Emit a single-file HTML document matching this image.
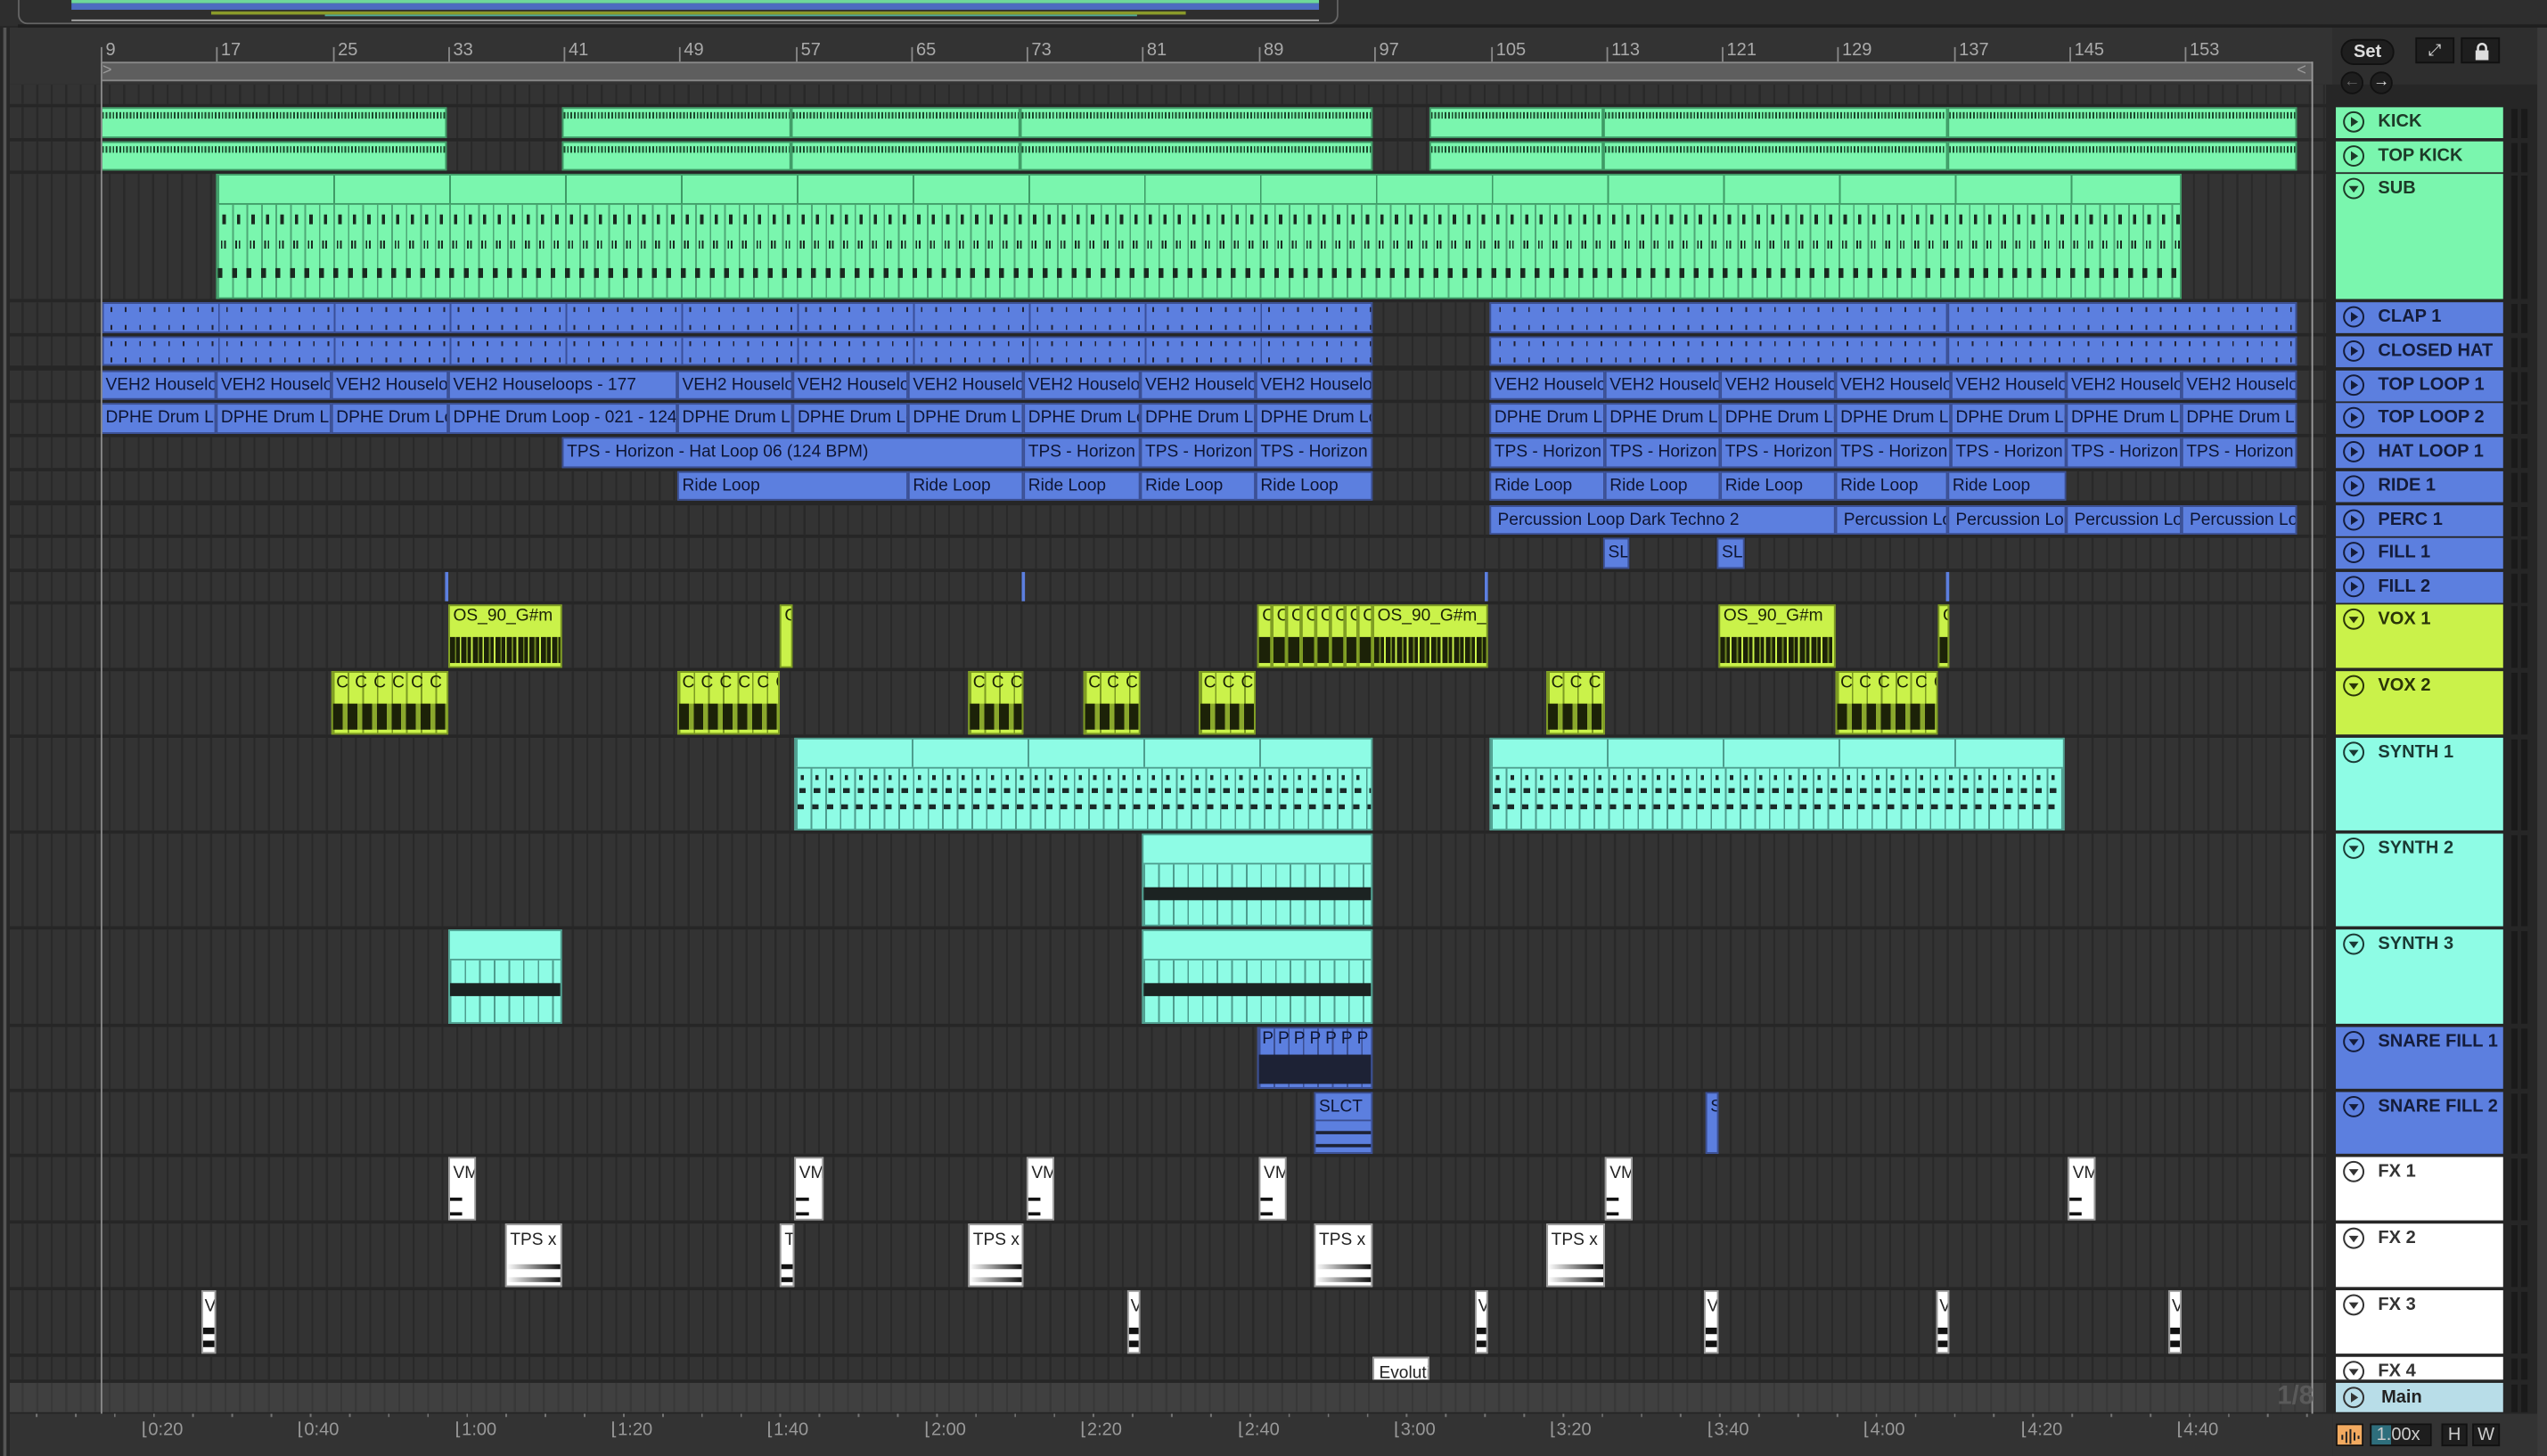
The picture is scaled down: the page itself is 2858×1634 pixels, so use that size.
<!DOCTYPE html>
<html><head><meta charset="utf-8">
<style>
html,body{margin:0;padding:0;background:#2a2a2a;width:2858px;height:1634px;overflow:hidden}
#s{position:absolute;left:0;top:0;width:1568px;height:896px;transform:scale(1.82270,1.82366);transform-origin:0 0;font-family:"Liberation Sans",sans-serif;background:#262626}
.a{position:absolute;box-sizing:border-box}
.ln{position:absolute;left:6px;width:1426px;background-color:#333;background-image:repeating-linear-gradient(90deg,#292929 0 1.2px,transparent 1.2px 8.91px);background-position:7.5px 0}
.c{position:absolute;top:0;height:100%;box-sizing:border-box;overflow:hidden;white-space:nowrap;font-size:10.5px;line-height:13px;padding-left:2px}
.g{background:#7af6ae;border:1px solid #3f9a66;color:#123}
.b{background:#5c7fdf;border:1px solid #3b4f92;color:#0e1533}
.y{background:#caf24a;border:1px solid #7c9a22;color:#1b2206}
.q{background:#8efce5;border:1px solid #4e9d8e}
.w{background:#fff;border:1px solid #999;color:#222}
.mk{background-image:repeating-linear-gradient(90deg,#1c4a2c 0 1px,transparent 1px 2.1px);background-size:100% 4px,100% 4px;background-repeat:no-repeat}
.hd{position:absolute;left:1438px;width:103px;box-sizing:border-box;font-weight:bold;font-size:11px;padding-left:26px;line-height:19px;overflow:hidden}
.hd svg{position:absolute;left:4px;top:2px}
.mt{position:absolute;left:1546px;width:10px;background:linear-gradient(90deg,#1a1a1a 0 4px,transparent 4px 6px,#1a1a1a 6px 10px)}
.rn{position:absolute;top:25px;font-size:11px;color:#aaa}
.rt{position:absolute;top:29px;width:1px;height:9px;background:#888}
.tl{position:absolute;top:873px;font-size:11px;color:#999}
</style></head><body><div id="s">
<div class="a" style="left:0;top:0;width:1568px;height:16px;background:#2e2e2e"></div>
<div class="a" style="left:11px;top:-4px;width:813px;height:19px;border:1.5px solid #666;border-top:none;border-radius:0 0 6px 6px"></div>
<div class="a" style="left:44px;top:0;width:768px;height:2px;background:#6ed89a"></div>
<div class="a" style="left:44px;top:2px;width:768px;height:4px;background:#4d6cc0"></div>
<div class="a" style="left:130px;top:7px;width:600px;height:1.5px;background:#8a9a2a"></div>
<div class="a" style="left:200px;top:8.5px;width:500px;height:1.5px;background:#4fa89a"></div>
<div class="a" style="left:44px;top:12px;width:768px;height:1px;background:#aaa"></div>
<div class="a" style="left:11px;top:15px;width:1557px;height:2px;background:#1f1f1f"></div>
<div class="a" style="left:6px;top:17px;width:1430px;height:35px;background:#333"></div>
<div class="rt" style="left:62px"></div><div class="rn" style="left:65px">9</div>
<div class="rt" style="left:133px"></div><div class="rn" style="left:136px">17</div>
<div class="rt" style="left:205px"></div><div class="rn" style="left:208px">25</div>
<div class="rt" style="left:276px"></div><div class="rn" style="left:279px">33</div>
<div class="rt" style="left:347px"></div><div class="rn" style="left:350px">41</div>
<div class="rt" style="left:418px"></div><div class="rn" style="left:421px">49</div>
<div class="rt" style="left:490px"></div><div class="rn" style="left:493px">57</div>
<div class="rt" style="left:561px"></div><div class="rn" style="left:564px">65</div>
<div class="rt" style="left:632px"></div><div class="rn" style="left:635px">73</div>
<div class="rt" style="left:703px"></div><div class="rn" style="left:706px">81</div>
<div class="rt" style="left:775px"></div><div class="rn" style="left:778px">89</div>
<div class="rt" style="left:846px"></div><div class="rn" style="left:849px">97</div>
<div class="rt" style="left:918px"></div><div class="rn" style="left:921px">105</div>
<div class="rt" style="left:989px"></div><div class="rn" style="left:992px">113</div>
<div class="rt" style="left:1060px"></div><div class="rn" style="left:1063px">121</div>
<div class="rt" style="left:1131px"></div><div class="rn" style="left:1134px">129</div>
<div class="rt" style="left:1203px"></div><div class="rn" style="left:1206px">137</div>
<div class="rt" style="left:1274px"></div><div class="rn" style="left:1277px">145</div>
<div class="rt" style="left:1345px"></div><div class="rn" style="left:1348px">153</div>
<div class="a" style="left:62px;top:38px;width:1362px;height:12px;background:#5e5e5e;border-top:1px solid #888;border-bottom:1px solid #888"></div>
<div class="a" style="left:63px;top:39px;color:#999;font-size:10px;line-height:10px">&gt;</div>
<div class="a" style="left:1414px;top:39px;color:#999;font-size:10px;line-height:10px">&lt;</div>
<div class="ln" style="top:52px;height:12px"></div>
<div class="ln" style="top:66px;height:19px"><div class="c g mk" style="left:56px;width:213px;background-position:0 2px,0 12px"></div><div class="c g mk" style="left:340px;width:141px;background-position:0 2px,0 12px"></div><div class="c g mk" style="left:481px;width:141px;background-position:0 2px,0 12px"></div><div class="c g mk" style="left:622px;width:217px;background-position:0 2px,0 12px"></div><div class="c g mk" style="left:874px;width:107px;background-position:0 2px,0 12px"></div><div class="c g mk" style="left:981px;width:212px;background-position:0 2px,0 12px"></div><div class="c g mk" style="left:1193px;width:215px;background-position:0 2px,0 12px"></div></div>
<div class="ln" style="top:87px;height:18px"><div class="c g mk" style="left:56px;width:213px;background-position:0 2px,0 12px"></div><div class="c g mk" style="left:340px;width:141px;background-position:0 2px,0 12px"></div><div class="c g mk" style="left:481px;width:141px;background-position:0 2px,0 12px"></div><div class="c g mk" style="left:622px;width:217px;background-position:0 2px,0 12px"></div><div class="c g mk" style="left:874px;width:107px;background-position:0 2px,0 12px"></div><div class="c g mk" style="left:981px;width:212px;background-position:0 2px,0 12px"></div><div class="c g mk" style="left:1193px;width:215px;background-position:0 2px,0 12px"></div></div>
<div class="ln" style="top:107px;height:77px"><div class="c g" style="left:127px;width:1210px;background-image:linear-gradient(#3f9a66,#3f9a66),repeating-linear-gradient(90deg,#3f9a66 0 1px,transparent 1px 71.3px),repeating-linear-gradient(90deg,transparent 0 3px,#1a2a20 3px 5px,transparent 5px 8.91px),repeating-linear-gradient(90deg,transparent 0 2px,#1a2a20 2px 3px,transparent 3px 4px,#1a2a20 4px 5px,transparent 5px 8.91px),repeating-linear-gradient(90deg,#1a2a20 0 3px,transparent 3px 8.91px),repeating-linear-gradient(90deg,#4fa877 0 1px,transparent 1px 8.91px);background-size:100% 1px,100% 17px,100% 6px,100% 5px,100% 6px,100% 60px;background-position:0 17px,0 0,0 24px,0 40px,0 57px,0 18px;background-repeat:no-repeat"></div></div>
<div class="ln" style="top:186px;height:19px"><div class="c b" style="left:56px;width:783px;background-image:repeating-linear-gradient(90deg,#3a4f98 0 1px,transparent 1px 71.3px),repeating-linear-gradient(90deg,#223 0 1px,transparent 1px 8.91px),repeating-linear-gradient(90deg,#223 0 1px,transparent 1px 8.91px);background-size:100% 100%,100% 3px,100% 3px;background-position:0 0,5px 2px,5px 13px;background-repeat:no-repeat"></div><div class="c b" style="left:911px;width:282px;background-image:repeating-linear-gradient(90deg,#223 0 1px,transparent 1px 8.91px),repeating-linear-gradient(90deg,#223 0 1px,transparent 1px 8.91px);background-size:100% 3px,100% 3px;background-position:5px 2px,5px 13px;background-repeat:no-repeat"></div><div class="c b" style="left:1193px;width:215px;background-image:repeating-linear-gradient(90deg,#223 0 1px,transparent 1px 8.91px),repeating-linear-gradient(90deg,#223 0 1px,transparent 1px 8.91px);background-size:100% 3px,100% 3px;background-position:5px 2px,5px 13px;background-repeat:no-repeat"></div></div>
<div class="ln" style="top:207px;height:18px"><div class="c b" style="left:56px;width:783px;background-image:repeating-linear-gradient(90deg,#3a4f98 0 1px,transparent 1px 71.3px),repeating-linear-gradient(90deg,#223 0 1px,transparent 1px 8.91px),repeating-linear-gradient(90deg,#223 0 1px,transparent 1px 8.91px);background-size:100% 100%,100% 3px,100% 3px;background-position:0 0,5px 2px,5px 12px;background-repeat:no-repeat"></div><div class="c b" style="left:911px;width:282px;background-image:repeating-linear-gradient(90deg,#223 0 1px,transparent 1px 8.91px),repeating-linear-gradient(90deg,#223 0 1px,transparent 1px 8.91px);background-size:100% 3px,100% 3px;background-position:5px 2px,5px 12px;background-repeat:no-repeat"></div><div class="c b" style="left:1193px;width:215px;background-image:repeating-linear-gradient(90deg,#223 0 1px,transparent 1px 8.91px),repeating-linear-gradient(90deg,#223 0 1px,transparent 1px 8.91px);background-size:100% 3px,100% 3px;background-position:5px 2px,5px 12px;background-repeat:no-repeat"></div></div>
<div class="ln" style="top:228px;height:18px;line-height:18px">
<div class="c b" style="left:56px;width:71px;line-height:16px">VEH2 Houseloops</div><div class="c b" style="left:127px;width:71px;line-height:16px">VEH2 Houseloops</div><div class="c b" style="left:198px;width:72px;line-height:16px">VEH2 Houseloops</div><div class="c b" style="left:270px;width:141px;line-height:16px">VEH2 Houseloops - 177</div><div class="c b" style="left:411px;width:71px;line-height:16px">VEH2 Houseloops</div><div class="c b" style="left:482px;width:71px;line-height:16px">VEH2 Houseloops</div><div class="c b" style="left:553px;width:71px;line-height:16px">VEH2 Houseloops</div><div class="c b" style="left:624px;width:72px;line-height:16px">VEH2 Houseloops</div><div class="c b" style="left:696px;width:71px;line-height:16px">VEH2 Houseloops</div><div class="c b" style="left:767px;width:72px;line-height:16px">VEH2 Houseloops</div>
<div class="c b" style="left:911px;width:71px;line-height:16px">VEH2 Houseloops</div><div class="c b" style="left:982px;width:71px;line-height:16px">VEH2 Houseloops</div><div class="c b" style="left:1053px;width:71px;line-height:16px">VEH2 Houseloops</div><div class="c b" style="left:1124px;width:71px;line-height:16px">VEH2 Houseloops</div><div class="c b" style="left:1195px;width:71px;line-height:16px">VEH2 Houseloops</div><div class="c b" style="left:1266px;width:71px;line-height:16px">VEH2 Houseloops</div><div class="c b" style="left:1337px;width:71px;line-height:16px">VEH2 Houseloops</div></div>
<div class="ln" style="top:248px;height:19px">
<div class="c b" style="left:56px;width:71px;line-height:17px">DPHE Drum Loop</div><div class="c b" style="left:127px;width:71px;line-height:17px">DPHE Drum Loop</div><div class="c b" style="left:198px;width:72px;line-height:17px">DPHE Drum Loop</div><div class="c b" style="left:270px;width:141px;line-height:17px">DPHE Drum Loop - 021 - 124</div><div class="c b" style="left:411px;width:71px;line-height:17px">DPHE Drum Loop</div><div class="c b" style="left:482px;width:71px;line-height:17px">DPHE Drum Loop</div><div class="c b" style="left:553px;width:71px;line-height:17px">DPHE Drum Loop</div><div class="c b" style="left:624px;width:72px;line-height:17px">DPHE Drum Loop</div><div class="c b" style="left:696px;width:71px;line-height:17px">DPHE Drum Loop</div><div class="c b" style="left:767px;width:72px;line-height:17px">DPHE Drum Loop</div>
<div class="c b" style="left:911px;width:71px;line-height:17px">DPHE Drum Loop</div><div class="c b" style="left:982px;width:71px;line-height:17px">DPHE Drum Loop</div><div class="c b" style="left:1053px;width:71px;line-height:17px">DPHE Drum Loop</div><div class="c b" style="left:1124px;width:71px;line-height:17px">DPHE Drum Loop</div><div class="c b" style="left:1195px;width:71px;line-height:17px">DPHE Drum Loop</div><div class="c b" style="left:1266px;width:71px;line-height:17px">DPHE Drum Loop</div><div class="c b" style="left:1337px;width:71px;line-height:17px">DPHE Drum Loop</div></div>
<div class="ln" style="top:269px;height:19px">
<div class="c b" style="left:340px;width:284px;line-height:17px">TPS - Horizon - Hat Loop 06 (124 BPM)</div><div class="c b" style="left:624px;width:72px;line-height:17px">TPS - Horizon</div><div class="c b" style="left:696px;width:71px;line-height:17px">TPS - Horizon</div><div class="c b" style="left:767px;width:72px;line-height:17px">TPS - Horizon</div>
<div class="c b" style="left:911px;width:71px;line-height:17px">TPS - Horizon</div><div class="c b" style="left:982px;width:71px;line-height:17px">TPS - Horizon</div><div class="c b" style="left:1053px;width:71px;line-height:17px">TPS - Horizon</div><div class="c b" style="left:1124px;width:71px;line-height:17px">TPS - Horizon</div><div class="c b" style="left:1195px;width:71px;line-height:17px">TPS - Horizon</div><div class="c b" style="left:1266px;width:71px;line-height:17px">TPS - Horizon</div><div class="c b" style="left:1337px;width:71px;line-height:17px">TPS - Horizon</div></div>
<div class="ln" style="top:290px;height:18px">
<div class="c b" style="left:411px;width:142px;line-height:17px">Ride Loop</div><div class="c b" style="left:553px;width:71px;line-height:17px">Ride Loop</div><div class="c b" style="left:624px;width:72px;line-height:17px">Ride Loop</div><div class="c b" style="left:696px;width:71px;line-height:17px">Ride Loop</div><div class="c b" style="left:767px;width:72px;line-height:17px">Ride Loop</div>
<div class="c b" style="left:911px;width:71px;line-height:17px">Ride Loop</div><div class="c b" style="left:982px;width:71px;line-height:17px">Ride Loop</div><div class="c b" style="left:1053px;width:71px;line-height:17px">Ride Loop</div><div class="c b" style="left:1124px;width:69px;line-height:17px">Ride Loop</div><div class="c b" style="left:1193px;width:73px;line-height:17px">Ride Loop</div></div>
<div class="ln" style="top:311px;height:18px">
<div class="c b" style="left:911px;width:213px;line-height:17px;padding-left:4px">Percussion Loop Dark Techno 2</div><div class="c b" style="left:1124px;width:69px;line-height:17px;padding-left:4px">Percussion Loop</div><div class="c b" style="left:1193px;width:73px;line-height:17px;padding-left:4px">Percussion Loop</div><div class="c b" style="left:1266px;width:71px;line-height:17px;padding-left:4px">Percussion Loop</div><div class="c b" style="left:1337px;width:71px;line-height:17px;padding-left:4px">Percussion Loop</div></div>
<div class="ln" style="top:331px;height:19px"><div class="c b" style="left:981px;width:16px;line-height:17px">SLC</div><div class="c b" style="left:1051px;width:17px;line-height:17px">SLC</div></div>
<div class="ln" style="top:352px;height:18px"><div class="c b" style="left:268px;width:2px;border:none"></div><div class="c b" style="left:623px;width:2px;border:none"></div><div class="c b" style="left:908px;width:2px;border:none"></div><div class="c b" style="left:1192px;width:2px;border:none"></div></div>
<div class="ln" style="top:372px;height:39px">
<div class="c y" style="left:270px;width:70px;background-image:repeating-linear-gradient(90deg,#1c2208 0 3px,#6b8420 3px 4px,#1c2208 4px 6px,transparent 6px 7px);background-size:100% 16px;background-position:0 19px;background-repeat:no-repeat">OS_90_G#m</div>
<div class="c y" style="left:474px;width:8px">C</div>
<div class="c y" style="left:768px;width:9px;background-image:linear-gradient(#1c2208,#1c2208);background-size:100% 16px;background-position:0 19px;background-repeat:no-repeat">C</div><div class="c y" style="left:777px;width:9px;background-image:linear-gradient(#1c2208,#1c2208);background-size:100% 16px;background-position:0 19px;background-repeat:no-repeat">C</div><div class="c y" style="left:786px;width:9px;background-image:linear-gradient(#1c2208,#1c2208);background-size:100% 16px;background-position:0 19px;background-repeat:no-repeat">C</div><div class="c y" style="left:795px;width:9px;background-image:linear-gradient(#1c2208,#1c2208);background-size:100% 16px;background-position:0 19px;background-repeat:no-repeat">C</div><div class="c y" style="left:804px;width:9px;background-image:linear-gradient(#1c2208,#1c2208);background-size:100% 16px;background-position:0 19px;background-repeat:no-repeat">C</div><div class="c y" style="left:813px;width:9px;background-image:linear-gradient(#1c2208,#1c2208);background-size:100% 16px;background-position:0 19px;background-repeat:no-repeat">C</div><div class="c y" style="left:822px;width:8px;background-image:linear-gradient(#1c2208,#1c2208);background-size:100% 16px;background-position:0 19px;background-repeat:no-repeat">C</div><div class="c y" style="left:830px;width:9px;background-image:linear-gradient(#1c2208,#1c2208);background-size:100% 16px;background-position:0 19px;background-repeat:no-repeat">C</div>
<div class="c y" style="left:839px;width:71px;background-image:repeating-linear-gradient(90deg,#1c2208 0 3px,#6b8420 3px 4px,#1c2208 4px 6px,transparent 6px 7px);background-size:100% 16px;background-position:0 19px;background-repeat:no-repeat">OS_90_G#m_</div>
<div class="c y" style="left:1052px;width:72px;background-image:repeating-linear-gradient(90deg,#1c2208 0 3px,#6b8420 3px 4px,#1c2208 4px 6px,transparent 6px 7px);background-size:100% 16px;background-position:0 19px;background-repeat:no-repeat">OS_90_G#m</div>
<div class="c y" style="left:1187px;width:7px;background-image:linear-gradient(#1c2208,#1c2208);background-size:100% 16px;background-position:0 19px;background-repeat:no-repeat">C</div></div>
<div class="ln" style="top:413px;height:39px">
<div class="c y" style="left:198px;width:72px;background-image:repeating-linear-gradient(90deg,#1c2208 0 6px,#8aa82c 6px 9px),repeating-linear-gradient(90deg,#7c9a22 0 1px,transparent 1px 9px);background-size:100% 16px,100% 100%;background-position:0 19px,0 0;background-repeat:no-repeat;word-spacing:1px">C C C C C C C C</div>
<div class="c y" style="left:411px;width:63px;background-image:repeating-linear-gradient(90deg,#1c2208 0 6px,#8aa82c 6px 9px),repeating-linear-gradient(90deg,#7c9a22 0 1px,transparent 1px 9px);background-size:100% 16px,100% 100%;background-position:0 19px,0 0;background-repeat:no-repeat;word-spacing:1px">C C C C C C C</div>
<div class="c y" style="left:590px;width:34px;background-image:repeating-linear-gradient(90deg,#1c2208 0 6px,#8aa82c 6px 9px),repeating-linear-gradient(90deg,#7c9a22 0 1px,transparent 1px 9px);background-size:100% 16px,100% 100%;background-position:0 19px,0 0;background-repeat:no-repeat;word-spacing:1px">C C C C</div>
<div class="c y" style="left:661px;width:35px;background-image:repeating-linear-gradient(90deg,#1c2208 0 6px,#8aa82c 6px 9px),repeating-linear-gradient(90deg,#7c9a22 0 1px,transparent 1px 9px);background-size:100% 16px,100% 100%;background-position:0 19px,0 0;background-repeat:no-repeat;word-spacing:1px">C C C C</div>
<div class="c y" style="left:732px;width:35px;background-image:repeating-linear-gradient(90deg,#1c2208 0 6px,#8aa82c 6px 9px),repeating-linear-gradient(90deg,#7c9a22 0 1px,transparent 1px 9px);background-size:100% 16px,100% 100%;background-position:0 19px,0 0;background-repeat:no-repeat;word-spacing:1px">C C C C</div>
<div class="c y" style="left:946px;width:36px;background-image:repeating-linear-gradient(90deg,#1c2208 0 6px,#8aa82c 6px 9px),repeating-linear-gradient(90deg,#7c9a22 0 1px,transparent 1px 9px);background-size:100% 16px,100% 100%;background-position:0 19px,0 0;background-repeat:no-repeat;word-spacing:1px">C C C C</div>
<div class="c y" style="left:1124px;width:63px;background-image:repeating-linear-gradient(90deg,#1c2208 0 6px,#8aa82c 6px 9px),repeating-linear-gradient(90deg,#7c9a22 0 1px,transparent 1px 9px);background-size:100% 16px,100% 100%;background-position:0 19px,0 0;background-repeat:no-repeat;word-spacing:1px">C C C C C C C</div></div>
<div class="ln" style="top:454px;height:57px">
<div class="c q" style="left:483px;width:356px;background-image:linear-gradient(#4e9d8e,#4e9d8e),repeating-linear-gradient(90deg,#4e9d8e 0 1px,transparent 1px 71.3px),repeating-linear-gradient(90deg,#4e9d8e 0 1px,transparent 1px 9px),repeating-linear-gradient(90deg,transparent 0 3px,#1a2a28 3px 5px,transparent 5px 9px),repeating-linear-gradient(90deg,transparent 0 2px,#1a2a28 2px 6px,transparent 6px 9px),repeating-linear-gradient(90deg,transparent 0 1px,#1a2a28 1px 5px,transparent 5px 9px);background-size:100% 1px,100% 17px,100% 40px,100% 3px,100% 3px,100% 3px;background-position:0 17px,0 0,0 18px,0 22px,0 30px,0 40px;background-repeat:no-repeat"></div>
<div class="c q" style="left:911px;width:354px;background-image:linear-gradient(#4e9d8e,#4e9d8e),repeating-linear-gradient(90deg,#4e9d8e 0 1px,transparent 1px 71.3px),repeating-linear-gradient(90deg,#4e9d8e 0 1px,transparent 1px 9px),repeating-linear-gradient(90deg,transparent 0 3px,#1a2a28 3px 5px,transparent 5px 9px),repeating-linear-gradient(90deg,transparent 0 2px,#1a2a28 2px 6px,transparent 6px 9px),repeating-linear-gradient(90deg,transparent 0 1px,#1a2a28 1px 5px,transparent 5px 9px);background-size:100% 1px,100% 17px,100% 40px,100% 3px,100% 3px,100% 3px;background-position:0 17px,0 0,0 18px,0 22px,0 30px,0 40px;background-repeat:no-repeat"></div></div>
<div class="ln" style="top:513px;height:57px">
<div class="c q" style="left:697px;width:142px;background-image:linear-gradient(#4e9d8e,#4e9d8e),linear-gradient(#1c2322,#1c2322),repeating-linear-gradient(90deg,#4e9d8e 0 1px,transparent 1px 9px);background-size:100% 1px,100% 8px,100% 40px;background-position:0 17px,0 32px,0 18px;background-repeat:no-repeat"></div></div>
<div class="ln" style="top:572px;height:58px">
<div class="c q" style="left:270px;width:70px;background-image:linear-gradient(#4e9d8e,#4e9d8e),linear-gradient(#1c2322,#1c2322),repeating-linear-gradient(90deg,#4e9d8e 0 1px,transparent 1px 9px);background-size:100% 1px,100% 8px,100% 40px;background-position:0 17px,0 32px,0 18px;background-repeat:no-repeat"></div>
<div class="c q" style="left:697px;width:142px;background-image:linear-gradient(#4e9d8e,#4e9d8e),linear-gradient(#1c2322,#1c2322),repeating-linear-gradient(90deg,#4e9d8e 0 1px,transparent 1px 9px);background-size:100% 1px,100% 8px,100% 40px;background-position:0 17px,0 32px,0 18px;background-repeat:no-repeat"></div></div>
<div class="ln" style="top:632px;height:38px"><div class="c b" style="left:768px;width:71px;background-image:linear-gradient(#1d2235,#1d2235),repeating-linear-gradient(90deg,#3b4f92 0 1px,transparent 1px 9px);background-size:100% 18px,100% 100%;background-position:0 16px,0 0;background-repeat:no-repeat">P P P P P P P P</div></div>
<div class="ln" style="top:672px;height:38px"><div class="c b" style="left:803px;width:36px;line-height:17px;background-image:linear-gradient(#3b4f92,#3b4f92),linear-gradient(#1d2235,#1d2235),linear-gradient(#1d2235,#1d2235);background-size:100% 1px,100% 2px,100% 2px;background-position:0 16px,0 23px,0 31px;background-repeat:no-repeat">SLCT</div><div class="c b" style="left:1044px;width:8px;line-height:17px">S</div></div>
<div class="ln" style="top:712px;height:39px">
<div class="c w" style="left:270px;width:17px;line-height:18px;background-image:linear-gradient(#111,#111),linear-gradient(#111,#111);background-size:50% 2px,50% 2px;background-position:0 24px,0 33px;background-repeat:no-repeat">VM</div><div class="c w" style="left:483px;width:18px;line-height:18px;background-image:linear-gradient(#111,#111),linear-gradient(#111,#111);background-size:50% 2px,50% 2px;background-position:0 24px,0 33px;background-repeat:no-repeat">VM</div><div class="c w" style="left:626px;width:17px;line-height:18px;background-image:linear-gradient(#111,#111),linear-gradient(#111,#111);background-size:50% 2px,50% 2px;background-position:0 24px,0 33px;background-repeat:no-repeat">VM</div><div class="c w" style="left:769px;width:17px;line-height:18px;background-image:linear-gradient(#111,#111),linear-gradient(#111,#111);background-size:50% 2px,50% 2px;background-position:0 24px,0 33px;background-repeat:no-repeat">VM</div><div class="c w" style="left:982px;width:17px;line-height:18px;background-image:linear-gradient(#111,#111),linear-gradient(#111,#111);background-size:50% 2px,50% 2px;background-position:0 24px,0 33px;background-repeat:no-repeat">VM</div><div class="c w" style="left:1267px;width:17px;line-height:18px;background-image:linear-gradient(#111,#111),linear-gradient(#111,#111);background-size:50% 2px,50% 2px;background-position:0 24px,0 33px;background-repeat:no-repeat">VM</div></div>
<div class="ln" style="top:753px;height:39px">
<div class="c w" style="left:305px;width:35px;line-height:18px;background-image:linear-gradient(90deg,#fff,#111),linear-gradient(90deg,#fff,#111);background-size:100% 3px,100% 3px;background-position:0 24px,0 32px;background-repeat:no-repeat">TPS x S</div><div class="c w" style="left:474px;width:9px;line-height:18px;background-image:linear-gradient(#111,#111),linear-gradient(#111,#111);background-size:100% 3px,100% 3px;background-position:0 24px,0 32px;background-repeat:no-repeat">T</div><div class="c w" style="left:590px;width:34px;line-height:18px;background-image:linear-gradient(90deg,#fff,#111),linear-gradient(90deg,#fff,#111);background-size:100% 3px,100% 3px;background-position:0 24px,0 32px;background-repeat:no-repeat">TPS x S</div><div class="c w" style="left:803px;width:36px;line-height:18px;background-image:linear-gradient(90deg,#fff,#111),linear-gradient(90deg,#fff,#111);background-size:100% 3px,100% 3px;background-position:0 24px,0 32px;background-repeat:no-repeat">TPS x S</div><div class="c w" style="left:946px;width:36px;line-height:18px;background-image:linear-gradient(90deg,#fff,#111),linear-gradient(90deg,#fff,#111);background-size:100% 3px,100% 3px;background-position:0 24px,0 32px;background-repeat:no-repeat">TPS x S</div></div>
<div class="ln" style="top:794px;height:39px">
<div class="c w" style="left:118px;width:9px;line-height:18px;padding-left:1px;background-image:linear-gradient(#111,#111),linear-gradient(#111,#111);background-size:100% 4px,100% 4px;background-position:0 22px,0 30px;background-repeat:no-repeat">V</div><div class="c w" style="left:688px;width:8px;line-height:18px;padding-left:1px;background-image:linear-gradient(#111,#111),linear-gradient(#111,#111);background-size:100% 4px,100% 4px;background-position:0 22px,0 30px;background-repeat:no-repeat">V</div><div class="c w" style="left:902px;width:8px;line-height:18px;padding-left:1px;background-image:linear-gradient(#111,#111),linear-gradient(#111,#111);background-size:100% 4px,100% 4px;background-position:0 22px,0 30px;background-repeat:no-repeat">V</div><div class="c w" style="left:1043px;width:9px;line-height:18px;padding-left:1px;background-image:linear-gradient(#111,#111),linear-gradient(#111,#111);background-size:100% 4px,100% 4px;background-position:0 22px,0 30px;background-repeat:no-repeat">V</div><div class="c w" style="left:1186px;width:8px;line-height:18px;padding-left:1px;background-image:linear-gradient(#111,#111),linear-gradient(#111,#111);background-size:100% 4px,100% 4px;background-position:0 22px,0 30px;background-repeat:no-repeat">V</div><div class="c w" style="left:1329px;width:8px;line-height:18px;padding-left:1px;background-image:linear-gradient(#111,#111),linear-gradient(#111,#111);background-size:100% 4px,100% 4px;background-position:0 22px,0 30px;background-repeat:no-repeat">V</div></div>
<div class="ln" style="top:835px;height:14px"><div class="c w" style="left:839px;width:35px;line-height:18px;padding-left:3px;border-bottom:none">Evolution</div></div>
<div class="ln" style="top:851px;height:18px;background-color:#404040;background-image:repeating-linear-gradient(90deg,#383838 0 1.2px,transparent 1.2px 8.91px)"></div>
<div class="a" style="left:61.5px;top:38px;width:1px;height:832px;background:#8a8a8a"></div>
<div class="a" style="left:1423px;top:38px;width:1.2px;height:832px;background:#9a9a9a"></div>
<div class="a" style="left:2px;top:17px;width:2px;height:879px;background:#555"></div>
<div class="a" style="left:6px;top:870px;width:1430px;height:26px;background:#333"></div>
<div class="tl" style="left:87px">⌊0:20</div><div class="tl" style="left:183px">⌊0:40</div><div class="tl" style="left:280px">⌊1:00</div><div class="tl" style="left:376px">⌊1:20</div><div class="tl" style="left:472px">⌊1:40</div><div class="tl" style="left:569px">⌊2:00</div><div class="tl" style="left:665px">⌊2:20</div><div class="tl" style="left:762px">⌊2:40</div><div class="tl" style="left:858px">⌊3:00</div><div class="tl" style="left:954px">⌊3:20</div><div class="tl" style="left:1051px">⌊3:40</div><div class="tl" style="left:1147px">⌊4:00</div><div class="tl" style="left:1244px">⌊4:20</div><div class="tl" style="left:1340px">⌊4:40</div>
<div class="a" style="left:6px;top:870px;width:1418px;height:2px;background-image:repeating-linear-gradient(90deg,#777 0 1px,transparent 1px 24.1px);background-position:16px 0"></div>
<div class="a" style="left:1402px;top:851px;font-size:16px;font-weight:bold;color:#5a5a5a;line-height:18px">1/8</div>
<div class="a" style="left:1436px;top:17px;width:126px;height:35px;background:#2e2e2e"></div>
<div class="a" style="left:1441px;top:24px;width:33px;height:16px;border-radius:8px;background:#1e1e1e;border:1px solid #111;color:#ddd;font-size:11px;font-weight:bold;text-align:center;line-height:14px">Set</div>
<div class="a" style="left:1487px;top:23px;width:24px;height:16px;background:#1e1e1e;border:1px solid #111;color:#ddd;font-size:10px;text-align:center;line-height:15px">⤢</div>
<div class="a" style="left:1515px;top:23px;width:24px;height:16px;background:#1e1e1e;border:1px solid #111"><svg width="24" height="16" viewBox="0 0 24 16"><rect x="8" y="7" width="8" height="6" fill="#ddd"/><path d="M9.5 7V5.5a2.5 2.5 0 0 1 5 0V7" stroke="#ddd" stroke-width="1.4" fill="none"/></svg></div>
<div class="a" style="left:1441px;top:44px;width:14px;height:14px;border-radius:7px;background:#1e1e1e;border:1px solid #111;color:#666;font-size:10px;text-align:center;line-height:12px">←</div>
<div class="a" style="left:1459px;top:44px;width:14px;height:14px;border-radius:7px;background:#1e1e1e;border:1px solid #111;color:#ddd;font-size:10px;text-align:center;line-height:12px">→</div>
<div class="hd" style="top:66px;height:19px;background:#7af6ae;color:#1d3a28"><svg width="14" height="14"><circle cx="7" cy="7" r="6" fill="none" stroke="#1d3a28" stroke-width="1.1"/><path d="M5.3 4v6l4.5-3z" fill="#1d3a28"/></svg>KICK</div>
<div class="hd" style="top:87px;height:19px;background:#7af6ae;color:#1d3a28"><svg width="14" height="14"><circle cx="7" cy="7" r="6" fill="none" stroke="#1d3a28" stroke-width="1.1"/><path d="M5.3 4v6l4.5-3z" fill="#1d3a28"/></svg>TOP KICK</div>
<div class="hd" style="top:107px;height:77px;background:#7af6ae;color:#1d3a28"><svg width="14" height="14"><circle cx="7" cy="7" r="6" fill="none" stroke="#1d3a28" stroke-width="1.1"/><path d="M4 5.5h6l-3 4z" fill="#1d3a28"/></svg>SUB</div>
<div class="hd" style="top:186px;height:19px;background:#5c7fdf;color:#141c3a"><svg width="14" height="14"><circle cx="7" cy="7" r="6" fill="none" stroke="#141c3a" stroke-width="1.1"/><path d="M5.3 4v6l4.5-3z" fill="#141c3a"/></svg>CLAP 1</div>
<div class="hd" style="top:207px;height:19px;background:#5c7fdf;color:#141c3a"><svg width="14" height="14"><circle cx="7" cy="7" r="6" fill="none" stroke="#141c3a" stroke-width="1.1"/><path d="M5.3 4v6l4.5-3z" fill="#141c3a"/></svg>CLOSED HAT</div>
<div class="hd" style="top:228px;height:19px;background:#5c7fdf;color:#141c3a"><svg width="14" height="14"><circle cx="7" cy="7" r="6" fill="none" stroke="#141c3a" stroke-width="1.1"/><path d="M5.3 4v6l4.5-3z" fill="#141c3a"/></svg>TOP LOOP 1</div>
<div class="hd" style="top:248px;height:19px;background:#5c7fdf;color:#141c3a"><svg width="14" height="14"><circle cx="7" cy="7" r="6" fill="none" stroke="#141c3a" stroke-width="1.1"/><path d="M5.3 4v6l4.5-3z" fill="#141c3a"/></svg>TOP LOOP 2</div>
<div class="hd" style="top:269px;height:19px;background:#5c7fdf;color:#141c3a"><svg width="14" height="14"><circle cx="7" cy="7" r="6" fill="none" stroke="#141c3a" stroke-width="1.1"/><path d="M5.3 4v6l4.5-3z" fill="#141c3a"/></svg>HAT LOOP 1</div>
<div class="hd" style="top:290px;height:19px;background:#5c7fdf;color:#141c3a"><svg width="14" height="14"><circle cx="7" cy="7" r="6" fill="none" stroke="#141c3a" stroke-width="1.1"/><path d="M5.3 4v6l4.5-3z" fill="#141c3a"/></svg>RIDE 1</div>
<div class="hd" style="top:311px;height:19px;background:#5c7fdf;color:#141c3a"><svg width="14" height="14"><circle cx="7" cy="7" r="6" fill="none" stroke="#141c3a" stroke-width="1.1"/><path d="M5.3 4v6l4.5-3z" fill="#141c3a"/></svg>PERC 1</div>
<div class="hd" style="top:331px;height:19px;background:#5c7fdf;color:#141c3a"><svg width="14" height="14"><circle cx="7" cy="7" r="6" fill="none" stroke="#141c3a" stroke-width="1.1"/><path d="M5.3 4v6l4.5-3z" fill="#141c3a"/></svg>FILL 1</div>
<div class="hd" style="top:352px;height:19px;background:#5c7fdf;color:#141c3a"><svg width="14" height="14"><circle cx="7" cy="7" r="6" fill="none" stroke="#141c3a" stroke-width="1.1"/><path d="M5.3 4v6l4.5-3z" fill="#141c3a"/></svg>FILL 2</div>
<div class="hd" style="top:372px;height:39px;background:#caf24a;color:#2a3408"><svg width="14" height="14"><circle cx="7" cy="7" r="6" fill="none" stroke="#2a3408" stroke-width="1.1"/><path d="M4 5.5h6l-3 4z" fill="#2a3408"/></svg>VOX 1</div>
<div class="hd" style="top:413px;height:39px;background:#caf24a;color:#2a3408"><svg width="14" height="14"><circle cx="7" cy="7" r="6" fill="none" stroke="#2a3408" stroke-width="1.1"/><path d="M4 5.5h6l-3 4z" fill="#2a3408"/></svg>VOX 2</div>
<div class="hd" style="top:454px;height:57px;background:#8efce5;color:#1a3a34"><svg width="14" height="14"><circle cx="7" cy="7" r="6" fill="none" stroke="#1a3a34" stroke-width="1.1"/><path d="M4 5.5h6l-3 4z" fill="#1a3a34"/></svg>SYNTH 1</div>
<div class="hd" style="top:513px;height:57px;background:#8efce5;color:#1a3a34"><svg width="14" height="14"><circle cx="7" cy="7" r="6" fill="none" stroke="#1a3a34" stroke-width="1.1"/><path d="M4 5.5h6l-3 4z" fill="#1a3a34"/></svg>SYNTH 2</div>
<div class="hd" style="top:572px;height:58px;background:#8efce5;color:#1a3a34"><svg width="14" height="14"><circle cx="7" cy="7" r="6" fill="none" stroke="#1a3a34" stroke-width="1.1"/><path d="M4 5.5h6l-3 4z" fill="#1a3a34"/></svg>SYNTH 3</div>
<div class="hd" style="top:632px;height:38px;background:#5c7fdf;color:#141c3a"><svg width="14" height="14"><circle cx="7" cy="7" r="6" fill="none" stroke="#141c3a" stroke-width="1.1"/><path d="M4 5.5h6l-3 4z" fill="#141c3a"/></svg>SNARE FILL 1</div>
<div class="hd" style="top:672px;height:38px;background:#5c7fdf;color:#141c3a"><svg width="14" height="14"><circle cx="7" cy="7" r="6" fill="none" stroke="#141c3a" stroke-width="1.1"/><path d="M4 5.5h6l-3 4z" fill="#141c3a"/></svg>SNARE FILL 2</div>
<div class="hd" style="top:712px;height:39px;background:#fff;color:#333"><svg width="14" height="14"><circle cx="7" cy="7" r="6" fill="none" stroke="#333" stroke-width="1.1"/><path d="M4 5.5h6l-3 4z" fill="#333"/></svg>FX 1</div>
<div class="hd" style="top:753px;height:39px;background:#fff;color:#333"><svg width="14" height="14"><circle cx="7" cy="7" r="6" fill="none" stroke="#333" stroke-width="1.1"/><path d="M4 5.5h6l-3 4z" fill="#333"/></svg>FX 2</div>
<div class="hd" style="top:794px;height:39px;background:#fff;color:#333"><svg width="14" height="14"><circle cx="7" cy="7" r="6" fill="none" stroke="#333" stroke-width="1.1"/><path d="M4 5.5h6l-3 4z" fill="#333"/></svg>FX 3</div>
<div class="hd" style="top:835px;height:14px;background:#fff;color:#333"><svg width="14" height="14"><circle cx="7" cy="7" r="6" fill="none" stroke="#333" stroke-width="1.1"/><path d="M4 5.5h6l-3 4z" fill="#333"/></svg>FX 4</div>
<div class="hd" style="top:851px;height:18px;background:#b8dde8;color:#222;padding-left:28px;line-height:18px"><svg width="14" height="14"><circle cx="7" cy="7" r="6" fill="none" stroke="#333" stroke-width="1.1"/><path d="M5.3 4v6l4.5-3z" fill="#333"/></svg>Main</div>
<div class="mt" style="top:67px;height:18px"></div><div class="mt" style="top:88px;height:18px"></div><div class="mt" style="top:108px;height:76px"></div><div class="mt" style="top:187px;height:18px"></div><div class="mt" style="top:208px;height:18px"></div><div class="mt" style="top:229px;height:18px"></div><div class="mt" style="top:249px;height:18px"></div><div class="mt" style="top:270px;height:18px"></div><div class="mt" style="top:291px;height:18px"></div><div class="mt" style="top:312px;height:18px"></div><div class="mt" style="top:332px;height:18px"></div><div class="mt" style="top:353px;height:18px"></div><div class="mt" style="top:373px;height:38px"></div><div class="mt" style="top:414px;height:38px"></div><div class="mt" style="top:455px;height:56px"></div><div class="mt" style="top:514px;height:56px"></div><div class="mt" style="top:573px;height:57px"></div><div class="mt" style="top:633px;height:37px"></div><div class="mt" style="top:673px;height:37px"></div><div class="mt" style="top:713px;height:38px"></div><div class="mt" style="top:754px;height:38px"></div><div class="mt" style="top:795px;height:38px"></div><div class="mt" style="top:836px;height:13px"></div><div class="mt" style="top:852px;height:17px"></div>
<div class="a" style="left:1562px;top:17px;width:6px;height:879px;background:#3a3a3a"></div>
<div class="a" style="left:1436px;top:870px;width:126px;height:26px;background:#333"></div>
<div class="a" style="left:1438px;top:876px;width:17px;height:14px;background:#f2aa60;border:1px solid #111"><svg width="15" height="12"><path d="M3 5v3M5.5 3v7M8 1.5v9M10.5 3.5v5M13 5.5v2" stroke="#222" stroke-width="1.1"/></svg></div>
<div class="a" style="left:1459px;top:876px;width:38px;height:14px;background:linear-gradient(90deg,#2e6e7c 0 12px,#1e1e1e 12px);border:1px solid #111;color:#ccc;font-size:11px;line-height:13px;padding-left:3px">1.00x</div>
<div class="a" style="left:1503px;top:876px;width:16px;height:14px;background:#1e1e1e;border:1px solid #111;color:#ccc;font-size:11px;line-height:13px;text-align:center">H</div>
<div class="a" style="left:1522px;top:876px;width:17px;height:14px;background:#1e1e1e;border:1px solid #111;color:#ccc;font-size:11px;line-height:13px;text-align:center">W</div>
</div></body></html>
